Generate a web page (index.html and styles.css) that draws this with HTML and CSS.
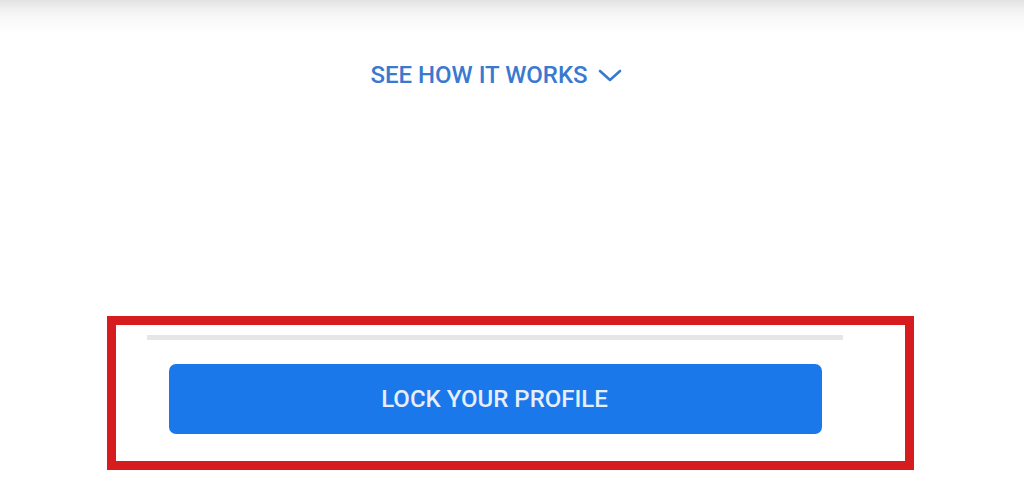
FILE: index.html
```html
<!DOCTYPE html>
<html>
<head>
<meta charset="utf-8">
<link rel="stylesheet" href="styles.css">
</head>
<body>
<div class="page">
  <div class="topshade"></div>
  <div class="how">
    <a class="how-link" href="#">SEE HOW IT WORKS
      <svg class="chev" width="24" height="14" viewBox="0 0 24 14"><path d="M2 2 L12 11 L22 2" fill="none" stroke="#3a79d0" stroke-width="2.6" stroke-linecap="round" stroke-linejoin="round"/></svg>
    </a>
  </div>
  <div class="panel">
    <div class="divider"></div>
    <button class="lock-btn">LOCK YOUR PROFILE</button>
  </div>
</div>
</body>
</html>
```

FILE: styles.css
```css
html, body {
  margin: 0;
  padding: 0;
  background: #ffffff;
  font-family: Roboto, "Liberation Sans", Arial, sans-serif;
}
.page {
  width: 1024px;
  height: 492px;
  overflow: hidden;
  display: flex;
  flex-direction: column;
}
.topshade {
  height: 34px;
  background: linear-gradient(to bottom, #e2e2e2 0%, #f0f0f0 25%, #f9f9f9 55%, #ffffff 100%);
}
.how {
  display: flex;
  justify-content: center;
}
.how-link {
  display: flex;
  align-items: center;
  gap: 10px;
  margin-left: -32px;
  color: #3a79d0;
  text-decoration: none;
  font-weight: 500;
  font-size: 24px;
  letter-spacing: 0;
  line-height: 26px;
  padding-top: 28px;
}
.chev {
  margin-top: 2px;
}
.panel {
  margin-top: 228px;
  margin-left: 107px;
  width: 807px;
  height: 154px;
  box-sizing: border-box;
  border: 9px solid #d71c20;
  display: flex;
  flex-direction: column;
  align-items: flex-start;
}
.divider {
  margin-top: 10px;
  margin-left: 31px;
  width: 696px;
  height: 5px;
  background: #e6e6e6;
}
.lock-btn {
  margin-top: 24px;
  margin-left: 53px;
  width: 653px;
  height: 70px;
  border: none;
  border-radius: 7px;
  background: #1a78ea;
  color: #e6eefb;
  font-family: Roboto, "Liberation Sans", Arial, sans-serif;
  font-weight: 500;
  font-size: 24px;
  letter-spacing: 0;
  padding: 0;
  padding-right: 2px;
}
```
